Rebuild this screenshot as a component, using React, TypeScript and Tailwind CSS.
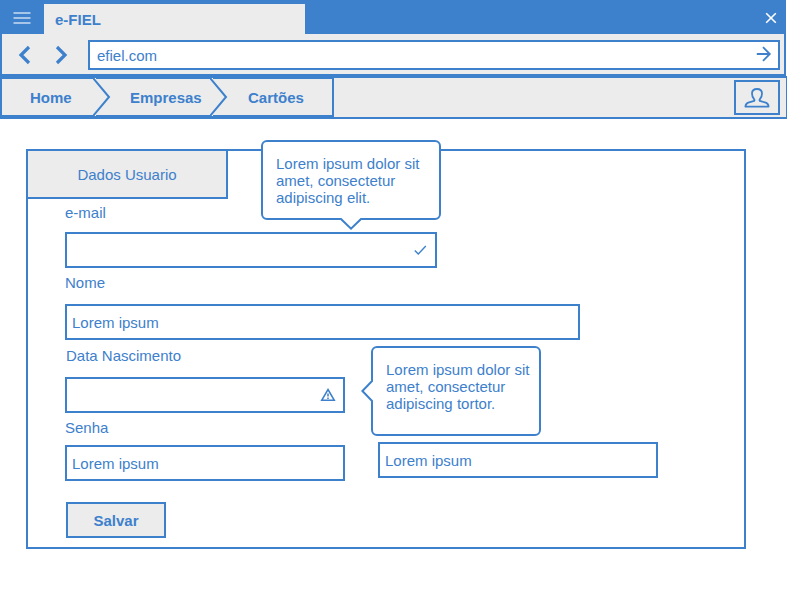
import type { InputHTMLAttributes, ReactNode } from 'react';

const inputClass =
  'block h-9 w-full border-2 border-[#3d80cc] bg-white pt-px pl-[5px] text-[15px] text-[#3d80cc] outline-none';

function UserIcon() {
  return (
    <svg width="26" height="20" viewBox="0 0 26 20" fill="none" stroke="currentColor" strokeWidth="1.8" strokeLinejoin="round" aria-hidden="true">
      <path d="M13 1C9.8 1 8 2.9 8 5.6c0 2.6.8 4.2 2 5.4.9 1 .5 1.9-.6 2.2l-5.2 1.5c-2 .7-2.6 1.8-2.8 3.9h23.2c-.2-2.1-.8-3.2-2.8-3.9l-5.2-1.5c-1.1-.3-1.5-1.2-.6-2.2 1.2-1.2 2-2.8 2-5.4C18 2.9 16.2 1 13 1Z" />
    </svg>
  );
}

function CrumbArrow() {
  return (
    <svg className="-my-px shrink-0" width="18" height="38" viewBox="0 0 18 38" fill="none" stroke="currentColor" strokeWidth="2" aria-hidden="true">
      <path d="M1 0h2v1H2ZM1 38h2v-1H2Z" fill="#fff" stroke="none" />
      <path d="M0 0L16 19L0 38" />
    </svg>
  );
}

type FieldProps = InputHTMLAttributes<HTMLInputElement> & {
  id: string;
  label: string;
  labelClass: string;
  widthClass: string;
  children?: ReactNode;
};

function Field({ id, label, labelClass, widthClass, children, ...rest }: FieldProps) {
  return (
    <div className={widthClass}>
      <label htmlFor={id} className={`block leading-[17px] ${labelClass}`}>
        {label}
      </label>
      <div className="relative">
        <input id={id} className={inputClass} {...rest} />
        {children}
      </div>
    </div>
  );
}

export default function App() {
  return (
    <div className="min-h-screen bg-white font-['Liberation_Sans',Arial,sans-serif] text-[15px] text-[#3d80cc]">
      <header>
        <div className="mr-px flex h-[34px] items-stretch bg-[#3d80cc]">
          <button type="button" aria-label="Menu" className="flex w-11 items-center justify-center pt-0.5 text-[#a6c5e8]">
            <svg width="18" height="12" viewBox="0 0 18 12" stroke="currentColor" strokeWidth="1.8" aria-hidden="true">
              <path d="M.5 1h17M.5 6h17M.5 11h17" />
            </svg>
          </button>
          <div className="mt-1 flex w-[261px] items-center bg-[#ececec] pt-0.5 pl-[11px] font-bold">e-FIEL</div>
          <button type="button" aria-label="Fechar" className="mr-[9px] ml-auto pt-0.5 text-white">
            <svg width="12" height="12" viewBox="0 0 12 12" stroke="currentColor" strokeWidth="1.6" aria-hidden="true">
              <path d="M1.2 1.2l9.6 9.6M10.8 1.2L1.2 10.8" />
            </svg>
          </button>
        </div>
        <div className="mr-px flex h-[42px] items-start border-x-2 border-b-2 border-[#3d80cc] bg-[#ececec] pt-1.5 pr-1">
          <div className="flex h-[30px] w-[86px] items-center gap-6 pl-4">
            <button type="button" aria-label="Voltar">
              <svg width="13" height="20" viewBox="0 0 13 20" fill="none" stroke="currentColor" strokeWidth="3.2" aria-hidden="true">
                <path d="M11 2L3 10l8 8" />
              </svg>
            </button>
            <button type="button" aria-label="Avançar">
              <svg width="13" height="20" viewBox="0 0 13 20" fill="none" stroke="currentColor" strokeWidth="3.2" aria-hidden="true">
                <path d="M2 2l8 8-8 8" />
              </svg>
            </button>
          </div>
          <div className="relative flex-1">
            <input
              type="text"
              aria-label="Endereço"
              defaultValue="efiel.com"
              className="block h-[30px] w-full border-2 border-[#3d80cc] bg-white pt-px pl-[7px] outline-none"
            />
            <button type="button" aria-label="Ir" className="absolute top-1.5 right-2">
              <svg width="16" height="16" viewBox="0 0 16 16" fill="none" stroke="currentColor" strokeWidth="1.8" aria-hidden="true">
                <path d="M.8 8H14M7 1.2L13.8 8 7 14.8" />
              </svg>
            </button>
          </div>
        </div>
        <div className="flex h-[43px] items-start justify-between border-y-2 border-r border-[#3d80cc] bg-[#ececec]">
          <nav aria-label="Navegação" className="flex h-[39px] items-stretch border-x-2 border-t border-b-2 border-[#3d80cc] font-bold">
            <a href="#home" className="flex w-[91px] items-center pt-0.5 pl-7">Home</a>
            <CrumbArrow />
            <a href="#empresas" className="flex w-[99px] items-center pt-0.5 pl-[19px]">Empresas</a>
            <CrumbArrow />
            <a href="#cartoes" className="flex w-[104px] items-center pt-0.5 pl-5">Cartões</a>
          </nav>
          <button type="button" aria-label="Usuário" className="mt-0.5 mr-1.5 flex h-[35px] w-[46px] items-center justify-center border-2 border-[#3d80cc]">
            <UserIcon />
          </button>
        </div>
      </header>

      <main className="mt-[30px] mr-[41px] ml-[26px] border-2 border-[#3d80cc]">
        <h1 className="flex h-12 w-[200px] items-center justify-center border-r-2 border-b-2 border-[#3d80cc] bg-[#ececec] pt-0.5">
          Dados Usuario
        </h1>
        <form className="pr-4 pb-[9px] pl-[37px]" onSubmit={(e) => e.preventDefault()}>
          <Field id="email" label="e-mail" type="email" labelClass="h-[33px] pt-[5px]" widthClass="w-[372px] max-w-full">
            <svg className="absolute top-3 right-2.5" width="13" height="12" viewBox="0 0 13 12" fill="none" stroke="currentColor" strokeWidth="1.4" aria-hidden="true">
              <path d="M.8 6.5L4.3 10 11.8 2" />
            </svg>
            <div role="tooltip" className="absolute bottom-12 left-[196px] h-20 w-[180px] rounded-md border-2 border-[#3d80cc] bg-white py-[13px] pr-1 pl-[13px] leading-[17px]">
              <p className="w-36">Lorem ipsum dolor sit amet, consectetur adipiscing elit.</p>
              <svg className="absolute top-[76px] left-[77px]" width="22" height="12" viewBox="0 0 22 12" aria-hidden="true">
                <path d="M0 0h22v1L11 11 0 1Z" fill="#fff" />
                <path d="M0 0L11 10.6 22 0" fill="none" stroke="currentColor" strokeWidth="2" />
              </svg>
            </div>
          </Field>
          <Field id="nome" label="Nome" type="text" defaultValue="Lorem ipsum" labelClass="h-9 pt-1.5" widthClass="w-[515px] max-w-full" />
          <Field id="nascimento" label="Data Nascimento" type="text" labelClass="h-[37px] pt-[7px] pl-px" widthClass="w-[280px] max-w-full">
            <svg className="absolute top-[11px] right-[9px]" width="16" height="14" viewBox="0 0 16 14" fill="none" stroke="currentColor" strokeWidth="1.5" aria-hidden="true">
              <path d="M8 1.5L14.3 12.3H1.7Z" />
              <path d="M8 5.5v3M8 9.5v1.5" />
            </svg>
            <div role="tooltip" className="absolute -top-[31px] left-[306px] h-[90px] w-[170px] rounded-md border-2 border-[#3d80cc] bg-white py-[13px] pr-1 pl-[13px] leading-[17px]">
              <p>Lorem ipsum dolor sit amet, consectetur adipiscing tortor.</p>
              <svg className="absolute top-8 -left-3" width="12" height="22" viewBox="0 0 12 22" aria-hidden="true">
                <path d="M12 0v22h-1L1 11 11 0Z" fill="#fff" />
                <path d="M12 0L1.4 11 12 22" fill="none" stroke="currentColor" strokeWidth="2" />
              </svg>
            </div>
          </Field>
          <div className="flex gap-[33px]">
            <Field id="senha" label="Senha" type="text" defaultValue="Lorem ipsum" labelClass="h-8 pt-1.5" widthClass="w-[280px]" />
            <div className="w-[280px] pt-[29px]">
              <input type="text" aria-label="Confirmar senha" defaultValue="Lorem ipsum" className={inputClass} />
            </div>
          </div>
          <button type="submit" className="mt-[21px] ml-px block h-9 w-[100px] border-2 border-[#3d80cc] bg-[#ececec] pt-0.5 font-bold">
            Salvar
          </button>
        </form>
      </main>
    </div>
  );
}
